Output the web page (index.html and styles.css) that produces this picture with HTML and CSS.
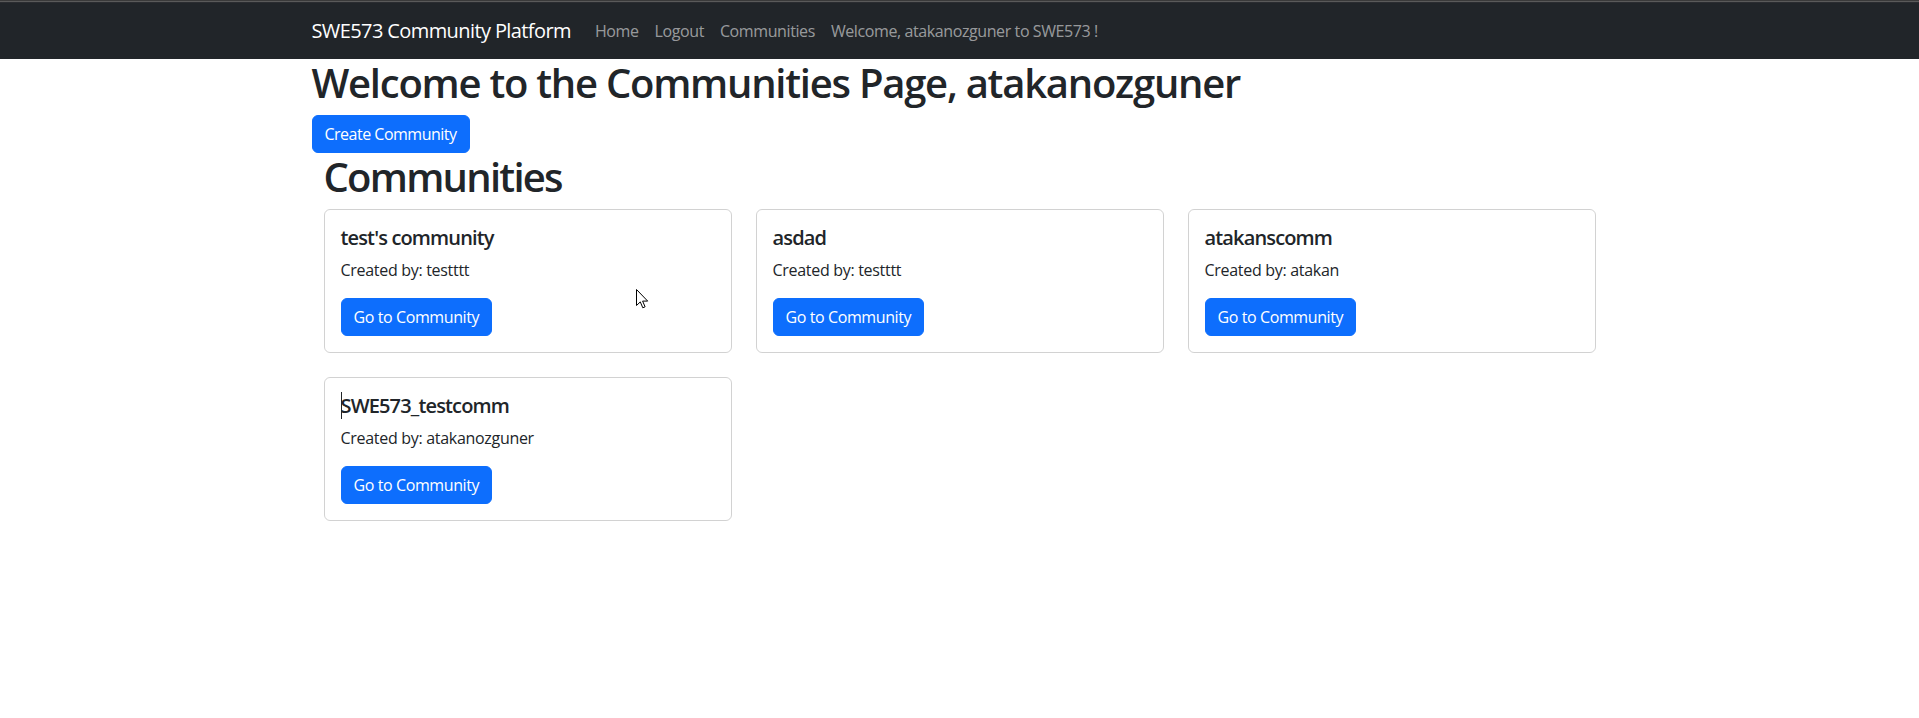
FILE: index.html
```html
<!DOCTYPE html>
<html lang="en">
<head>
<meta charset="utf-8">
<title>Communities</title>
<link rel="stylesheet" href="styles.css">
</head>
<body>
<div class="topline"></div>
<nav class="navbar">
  <div class="nav-inner">
    <a class="brand" href="#">SWE573 Community Platform</a>
    <ul class="nav-links">
      <li><a class="nav-link" href="#">Home</a></li>
      <li><a class="nav-link" href="#">Logout</a></li>
      <li><a class="nav-link" href="#">Communities</a></li>
      <li><span class="nav-link">Welcome, atakanozguner to SWE573 !</span></li>
    </ul>
  </div>
</nav>
<main class="container">
  <h1 class="page-title">Welcome to the Communities Page, atakanozguner</h1>
  <div class="actions"><a class="btn btn-create" href="#">Create Community</a></div>
  <section class="inner">
    <h1 class="page-title section-title">Communities</h1>
    <div class="card-grid">
      <div class="card">
        <h5 class="card-title">test's community</h5>
        <p class="card-text">Created by: testttt</p>
        <a class="btn" href="#">Go to Community</a>
        <svg class="pointer" width="13" height="21" viewBox="0 0 13 21"><path d="M0.5 0.5 L0.5 16.5 L4.3 12.9 L6.8 18.8 L9.1 17.8 L6.6 12.1 L11.7 12.1 Z" fill="#fff" stroke="#000" stroke-width="1" stroke-linejoin="miter"/></svg>
      </div>
      <div class="card">
        <h5 class="card-title">asdad</h5>
        <p class="card-text">Created by: testttt</p>
        <a class="btn" href="#">Go to Community</a>
      </div>
      <div class="card">
        <h5 class="card-title">atakanscomm</h5>
        <p class="card-text">Created by: atakan</p>
        <a class="btn" href="#">Go to Community</a>
      </div>
      <div class="card">
        <h5 class="card-title"><span class="caret"></span>SWE573_testcomm</h5>
        <p class="card-text">Created by: atakanozguner</p>
        <a class="btn" href="#">Go to Community</a>
      </div>
    </div>
  </section>
</main>
</body>
</html>
```
FILE: styles.css
```css
* { box-sizing: border-box; }
html, body { margin: 0; padding: 0; }
body {
  font-family: "Open Sans", "Noto Sans", sans-serif;
  font-size: 16px;
  line-height: 24px;
  color: #212529;
  background: #fff;
}
a { text-decoration: none; }

.topline {
  height: 3px;
  background: linear-gradient(#3a3a3a 0, #3a3a3a 1px, #5a5a5a 1px, #5a5a5a 2px, #2a2c30 2px);
}
.navbar {
  background: #212529;
  padding: 8px 0;
}
.nav-inner {
  max-width: 1320px;
  margin: 0 auto;
  padding: 0 12px;
  display: flex;
  align-items: center;
}
.brand {
  color: #fff;
  font-size: 20px;
  line-height: 30px;
  padding: 5px 0;
  margin-right: 16px;
  letter-spacing: -0.6px;
}
.nav-links {
  list-style: none;
  margin: 0;
  padding: 0;
  display: flex;
}
.nav-link {
  display: block;
  padding: 8px;
  color: rgba(255, 255, 255, 0.55);
  line-height: 24px;
  letter-spacing: -0.4px;
}

.container {
  max-width: 1320px;
  margin: 0 auto;
  padding: 0 12px;
}
.page-title {
  font-size: 40px;
  font-weight: 600;
  line-height: 48px;
  margin: 0 0 8px;
  letter-spacing: -1.25px;
}
.section-title {
  letter-spacing: -1.75px;
}
.actions { height: 38px; }
.btn {
  display: inline-block;
  background: #0d6efd;
  color: #fff;
  border: 1px solid #0d6efd;
  border-radius: 6px;
  padding: 6px 12px;
  font-size: 16px;
  line-height: 24px;
  letter-spacing: -0.4px;
}
.btn-create {
  letter-spacing: -0.5px;
}
.inner {
  padding: 0 12px;
}
.card-grid {
  display: grid;
  grid-template-columns: repeat(3, 1fr);
  gap: 24px;
}
.card {
  position: relative;
  border: 1px solid rgba(0, 0, 0, 0.175);
  border-radius: 6px;
  padding: 16px;
}
.card-title {
  position: relative;
  font-size: 20px;
  font-weight: 600;
  line-height: 24px;
  margin: 0 0 8px;
  letter-spacing: -0.85px;
}
.card-text {
  margin: 0 0 16px;
  letter-spacing: -0.3px;
}
.caret {
  position: absolute;
  left: 0;
  top: -2px;
  width: 1px;
  height: 27px;
  background: #212529;
}
.pointer {
  position: absolute;
  left: 311px;
  top: 79px;
}
```
